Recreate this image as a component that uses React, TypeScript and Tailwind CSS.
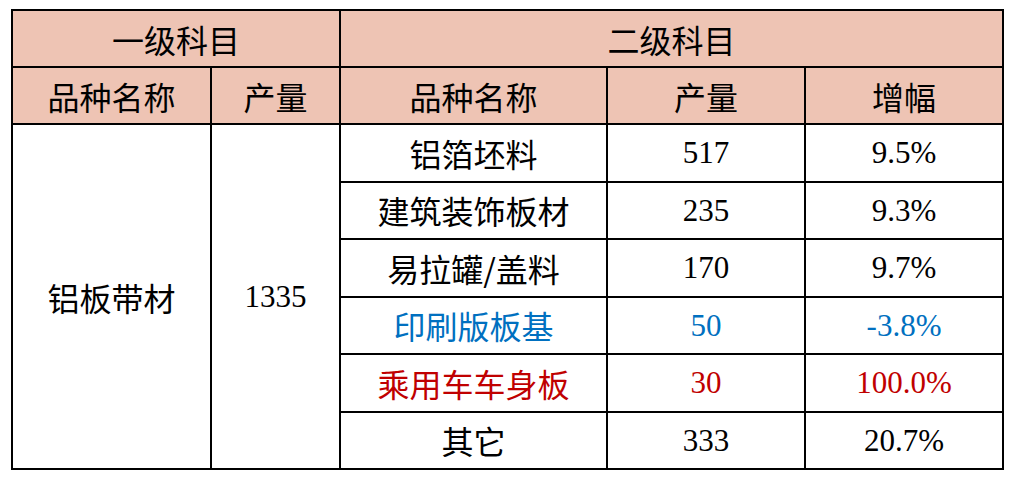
const rows = [
  { name: '铝箔坯料', qty: '517', rate: '9.5%', tone: 'text-black' },
  { name: '建筑装饰板材', qty: '235', rate: '9.3%', tone: 'text-black' },
  { name: '易拉罐/盖料', qty: '170', rate: '9.7%', tone: 'text-black' },
  { name: '印刷版板基', qty: '50', rate: '-3.8%', tone: 'text-[#0070c0]' },
  { name: '乘用车车身板', qty: '30', rate: '100.0%', tone: 'text-[#c00000]' },
  { name: '其它', qty: '333', rate: '20.7%', tone: 'text-black' },
]

const cjk = "font-['Microsoft_YaHei','Noto_Sans_CJK_SC',sans-serif] text-[32px]"
const num = "font-['Liberation_Serif','Times_New_Roman',serif] text-[31px]"
const cell = 'border-2 border-black text-center align-middle p-0 leading-none'

export default function App() {
  return (
    <div className="w-[1020px] h-[480px] bg-white pl-[11px] pt-[9px]">
      <table className="w-[991px] border-collapse table-fixed">
        <colgroup>
          <col className="w-[199px]" />
          <col className="w-[129px]" />
          <col className="w-[267px]" />
          <col className="w-[198px]" />
          <col className="w-[198px]" />
        </colgroup>
        <thead className="bg-[#eec4b4] text-black">
          <tr className="h-[57px]">
            <th colSpan={2} className={`${cell} ${cjk} font-normal`}>一级科目</th>
            <th colSpan={3} className={`${cell} ${cjk} font-normal`}>二级科目</th>
          </tr>
          <tr className="h-[57px]">
            <th className={`${cell} ${cjk} font-normal`}>品种名称</th>
            <th className={`${cell} ${cjk} font-normal`}>产量</th>
            <th className={`${cell} ${cjk} font-normal`}>品种名称</th>
            <th className={`${cell} ${cjk} font-normal`}>产量</th>
            <th className={`${cell} ${cjk} font-normal`}>增幅</th>
          </tr>
        </thead>
        <tbody>
          {rows.map((r, i) => (
            <tr key={r.name} className="h-[57.5px]">
              {i === 0 && (
                <>
                  <td rowSpan={6} className={`${cell} ${cjk} text-black`}>铝板带材</td>
                  <td rowSpan={6} className={`${cell} ${num} text-black`}>1335</td>
                </>
              )}
              <td className={`${cell} ${cjk} ${r.tone}`}>{r.name}</td>
              <td className={`${cell} ${num} ${r.tone}`}>{r.qty}</td>
              <td className={`${cell} ${num} ${r.tone}`}>{r.rate}</td>
            </tr>
          ))}
        </tbody>
      </table>
    </div>
  )
}
